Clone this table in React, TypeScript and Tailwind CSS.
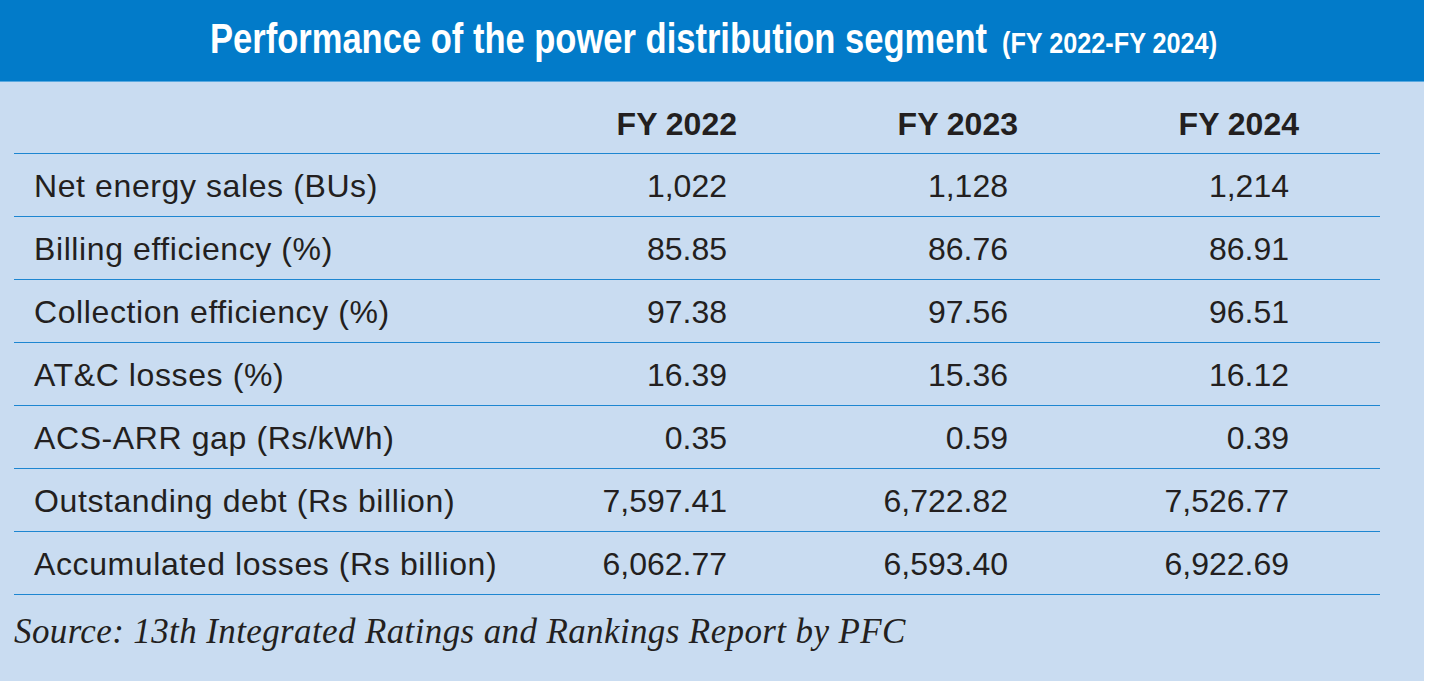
import React from "react";

const rows: [string, string, string, string][] = [
  ["Net energy sales (BUs)", "1,022", "1,128", "1,214"],
  ["Billing efficiency (%)", "85.85", "86.76", "86.91"],
  ["Collection efficiency (%)", "97.38", "97.56", "96.51"],
  ["AT&C losses (%)", "16.39", "15.36", "16.12"],
  ["ACS-ARR gap (Rs/kWh)", "0.35", "0.59", "0.39"],
  ["Outstanding debt (Rs billion)", "7,597.41", "6,722.82", "7,526.77"],
  ["Accumulated losses (Rs billion)", "6,062.77", "6,593.40", "6,922.69"],
];

export default function App() {
  return (
    <div className="w-[1436px] h-[684px] bg-white">
      <div className="w-[1424px] h-[681px] bg-[#c9dcf1] flex flex-col">
        <div className="h-[82px] bg-[#027bc9] border-b border-[#5aa9e0] flex items-start justify-center">
          <div
            className="mt-[14px] text-white font-bold whitespace-nowrap leading-[48px] flex items-baseline"
            style={{ fontFamily: "'Liberation Sans', Arial, sans-serif" }}
          >
            <div className="w-[777px]">
              <span className="inline-block origin-left scale-x-[0.803] text-[43px]">
                Performance of the power distribution segment
              </span>
            </div>
            <div className="w-[213px] ml-[15px]">
              <span className="inline-block origin-left scale-x-[0.87] text-[29px]">(FY 2022-FY 2024)</span>
            </div>
          </div>
        </div>
        <div className="pl-[14px] w-[1380px]" style={{ fontFamily: "'Liberation Sans', Arial, sans-serif" }}>
          <div className="flex h-[72px] pt-[26px] border-b-[1.5px] border-[#1d86d1] text-[32px] leading-[32px] font-bold text-[#231f20]">
            <div className="w-[442px]" />
            <div className="w-[281px] text-right">FY 2022</div>
            <div className="w-[281px] text-right">FY 2023</div>
            <div className="w-[281px] text-right">FY 2024</div>
          </div>
          {rows.map((r) => (
            <div
              key={r[0]}
              className="flex items-center h-[63px] pt-[2px] border-b-[1.5px] border-[#1d86d1] text-[32px] leading-[32px] text-[#231f20]"
            >
              <div className="w-[442px] pl-[20px] whitespace-nowrap tracking-[0.6px]">{r[0]}</div>
              <div className="w-[281px] text-right pr-[10px]">{r[1]}</div>
              <div className="w-[281px] text-right pr-[10px]">{r[2]}</div>
              <div className="w-[281px] text-right pr-[10px]">{r[3]}</div>
            </div>
          ))}
          <div
            className="mt-[19px] italic text-[35px] leading-[36px] tracking-[0.38px] text-[#231f20] whitespace-nowrap"
            style={{ fontFamily: "'Liberation Serif', 'Times New Roman', serif" }}
          >
            Source: 13th Integrated Ratings and Rankings Report by PFC
          </div>
        </div>
      </div>
    </div>
  );
}
